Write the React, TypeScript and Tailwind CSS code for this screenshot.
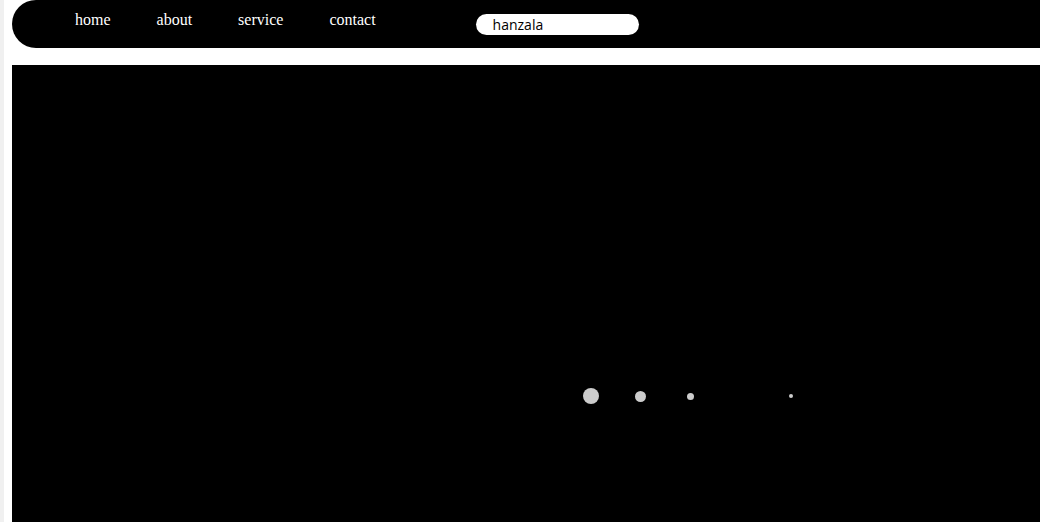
import React from "react";

const links = ["home", "about", "service", "contact"];

function Dots() {
  return (
    <div className="flex items-center h-[16px]">
      <div className="w-[16px] h-[16px] rounded-full bg-[#cccccc]" />
      <div className="ml-[36px] w-[11px] h-[11px] rounded-full bg-[#cccccc]" />
      <div className="ml-[41px] w-[7px] h-[7px] rounded-full bg-[#cccccc]" />
      <div className="ml-[95px] w-[4px] h-[4px] rounded-full bg-[#cccccc]" />
    </div>
  );
}

export default function App() {
  return (
    <div className="flex w-[1040px] h-[522px] overflow-hidden bg-white">
      <div className="w-[4px] shrink-0 bg-[#f0f0f0]" />
      <div className="flex flex-col flex-1 pl-[8px] min-w-0">
        <nav className="flex items-start h-[48px] w-[1100px] bg-black rounded-l-[24px] pl-[63px] pt-[8px]">
          <ul className="flex gap-[46px] font-['Liberation_Serif',serif] text-[16px] text-white">
            {links.map((l) => (
              <li key={l}>
                <a href="#">{l}</a>
              </li>
            ))}
          </ul>
          <input
            defaultValue="hanzala"
            className="ml-[100px] mt-[6px] w-[163px] h-[21px] rounded-full bg-white pl-[17px] text-[14px] text-black font-['Open_Sans',sans-serif] outline-none"
          />
        </nav>
        <main className="mt-[17px] flex-1 w-[1100px] bg-black pt-[323px] pl-[571px]">
          <Dots />
        </main>
      </div>
    </div>
  );
}
